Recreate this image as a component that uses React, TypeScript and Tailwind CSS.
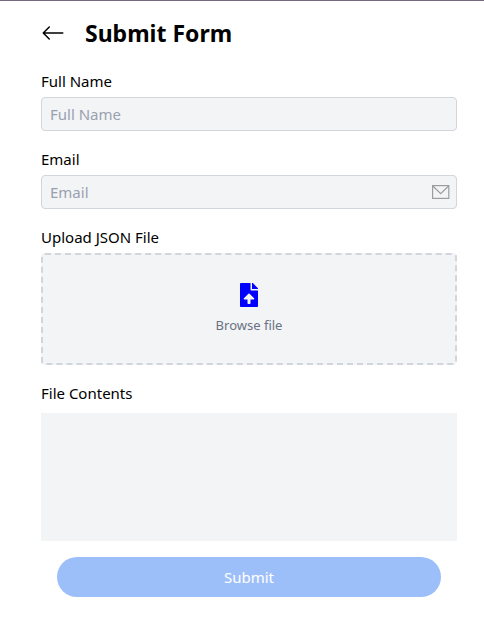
import { useState } from 'react';
import { BsArrowLeft } from 'react-icons/bs';
import { FaFileUpload } from 'react-icons/fa';

const inputClass =
  'block w-full h-[34px] rounded border border-gray-300 bg-gray-100 px-2 text-[15px] leading-6 text-gray-900 placeholder:text-gray-400 outline-none';

function MailIcon({ className }: { className?: string }) {
  return (
    <svg
      width="18"
      height="14"
      viewBox="0 0 18 14"
      fill="none"
      stroke="currentColor"
      strokeWidth="1.2"
      className={className}
      aria-hidden="true"
    >
      <rect x="0.6" y="0.6" width="16.2" height="12.8" />
      <path d="M0.8 1 L8.7 8.6 L16.6 1" />
    </svg>
  );
}

export default function App() {
  const [contents, setContents] = useState('');

  const handleFile = async (e: React.ChangeEvent<HTMLInputElement>) => {
    const file = e.target.files?.[0];
    if (file) setContents(await file.text());
  };

  return (
    <div className="min-h-screen border-t border-[#75697f] bg-white pl-[41px] pr-[27px] pt-3.5 pb-6 font-['Noto_Sans','Open_Sans',sans-serif] text-[15px] leading-6 text-black">
      {/* Header */}
      <header className="flex items-center gap-5">
        <button type="button" aria-label="Back">
          <BsArrowLeft size={24} />
        </button>
        <h1 className="text-[23px] leading-9 font-bold">Submit Form</h1>
      </header>

      <form className="mt-[18px]" onSubmit={(e) => e.preventDefault()}>
        <div className="flex flex-col gap-4">
          <div>
            <label htmlFor="name" className="mb-1 block">
              Full Name
            </label>
            <input id="name" type="text" placeholder="Full Name" className={inputClass} />
          </div>

          <div>
            <label htmlFor="email" className="mb-1 block">
              Email
            </label>
            <div className="relative">
              <input id="email" type="email" placeholder="Email" className={inputClass} />
              <MailIcon className="pointer-events-none absolute inset-y-0 right-[7px] my-auto text-[#9b9da1]" />
            </div>
          </div>

          {/* File picker */}
          <div>
            <label htmlFor="file" className="mb-1 block">
              Upload JSON File
            </label>
            <label
              htmlFor="file"
              className="flex h-28 cursor-pointer flex-col items-center justify-center gap-2 rounded border-2 border-dashed border-gray-300 bg-gray-100"
            >
              <FaFileUpload size={24} className="text-[#0000ff]" />
              <span className="text-[13px] leading-5 text-gray-500">Browse file</span>
            </label>
            <input id="file" type="file" accept=".json" onChange={handleFile} className="sr-only" />
          </div>
        </div>

        <div className="mt-4">
          <label htmlFor="contents" className="mb-2 block">
            File Contents
          </label>
          <textarea
            id="contents"
            readOnly
            value={contents}
            className="block h-32 w-full resize-none bg-gray-100 p-2 outline-none"
          />
        </div>

        <div className="mt-4 px-4">
          <button type="submit" className="h-10 w-full rounded-full bg-[#9dbff9] text-white">
            Submit
          </button>
        </div>
      </form>
    </div>
  );
}
